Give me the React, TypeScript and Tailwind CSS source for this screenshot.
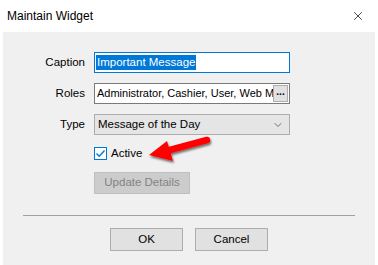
import { ChevronDown, X } from 'lucide-react';

const FONT = "font-['Liberation_Sans',Arial,sans-serif]";

function FieldRow({ label, children }: { label: string; children: React.ReactNode }) {
  return (
    <div className="flex items-center h-[21px]">
      <span className="w-[83px] text-right pr-[1px]">{label}</span>
      <div className="ml-[8px] w-[196px] h-full">{children}</div>
    </div>
  );
}

function RedArrow() {
  return (
    <svg width="66" height="30" viewBox="0 0 66 30" className="ml-[6px] -mt-[8px]">
      <defs>
        <filter id="sh" x="-20%" y="-40%" width="140%" height="180%">
          <feDropShadow dx="1" dy="2" stdDeviation="1.2" floodColor="#000" floodOpacity="0.55" />
        </filter>
      </defs>
      <g filter="url(#sh)">
        <line x1="18" y1="16" x2="59" y2="5" stroke="#ff0000" strokeWidth="6.5" strokeLinecap="round" />
        <polygon points="1,20 19,6 25,26" fill="#ff0000" />
      </g>
    </svg>
  );
}

export default function App() {
  return (
    <div className={`w-[378px] h-[265px] bg-white flex flex-col text-[11.5px] text-black ${FONT}`}>
      {/* Title bar */}
      <div className="h-[32px] flex items-center justify-between pl-[7px] pr-[13px] shrink-0">
        <span className="text-[12px] text-[#000]">Maintain Widget</span>
        <X className="w-[14px] h-[14px] text-[#111]" strokeWidth={1.3} />
      </div>

      {/* Body */}
      <div className="mx-[3px] flex-1 bg-[#f0f0f0] pt-[20px]">
        <div className="flex flex-col gap-[10px]">
          <FieldRow label="Caption">
            <div className="h-full border border-[#0078d7] bg-white flex items-center px-[1px]">
              <span className="bg-[#0078d7] text-white leading-[15px] px-[1px]">Important Message</span>
            </div>
          </FieldRow>
          <FieldRow label="Roles">
            <div className="h-full border border-[#7a7a7a] bg-white flex items-center pl-[2px] pr-[1px]">
              <span className="flex-1 min-w-0 overflow-hidden whitespace-nowrap text-[11px]">Administrator, Cashier, User, Web M</span>
              <div className="w-[15px] h-[17px] shrink-0 border border-[#adadad] bg-[#e1e1e1] flex items-center justify-center text-[10px] font-bold leading-none pb-[3px]">
                ...
              </div>
            </div>
          </FieldRow>
          <FieldRow label="Type">
            <div className="h-full border border-[#adadad] bg-[#e5e5e5] flex items-center pl-[3px] pr-[5px]">
              <span className="flex-1">Message of the Day</span>
              <ChevronDown className="w-[12px] h-[12px] text-[#333]" strokeWidth={1.3} />
            </div>
          </FieldRow>
        </div>

        {/* Active checkbox */}
        <div className="flex items-center mt-[12px] ml-[91px] h-[13px]">
          <div className="w-[13px] h-[13px] border border-[#0078d7] bg-white flex items-center justify-center">
            <svg width="11" height="11" viewBox="0 0 11 11">
              <path d="M1.5 5.5 L4.2 8.2 L9.5 2.5" fill="none" stroke="#0078d7" strokeWidth="1.4" />
            </svg>
          </div>
          <span className="ml-[4px]">Active</span>
          <RedArrow />
        </div>

        {/* Update Details */}
        <div className="mt-[12px] ml-[91px] w-[96px] h-[22px] border border-[#bfbfbf] bg-[#cccccc] text-[#838383] flex items-center justify-center">
          Update Details
        </div>

        {/* Separator */}
        <div className="mt-[21px] ml-[20px] w-[332px] h-px bg-[#a0a0a0]" />

        {/* Buttons */}
        <div className="mt-[12px] ml-[107px] flex gap-[12px]">
          <div className="w-[73px] h-[23px] border border-[#adadad] bg-[#e1e1e1] flex items-center justify-center">OK</div>
          <div className="w-[73px] h-[23px] border border-[#adadad] bg-[#e1e1e1] flex items-center justify-center">Cancel</div>
        </div>
      </div>
    </div>
  );
}
